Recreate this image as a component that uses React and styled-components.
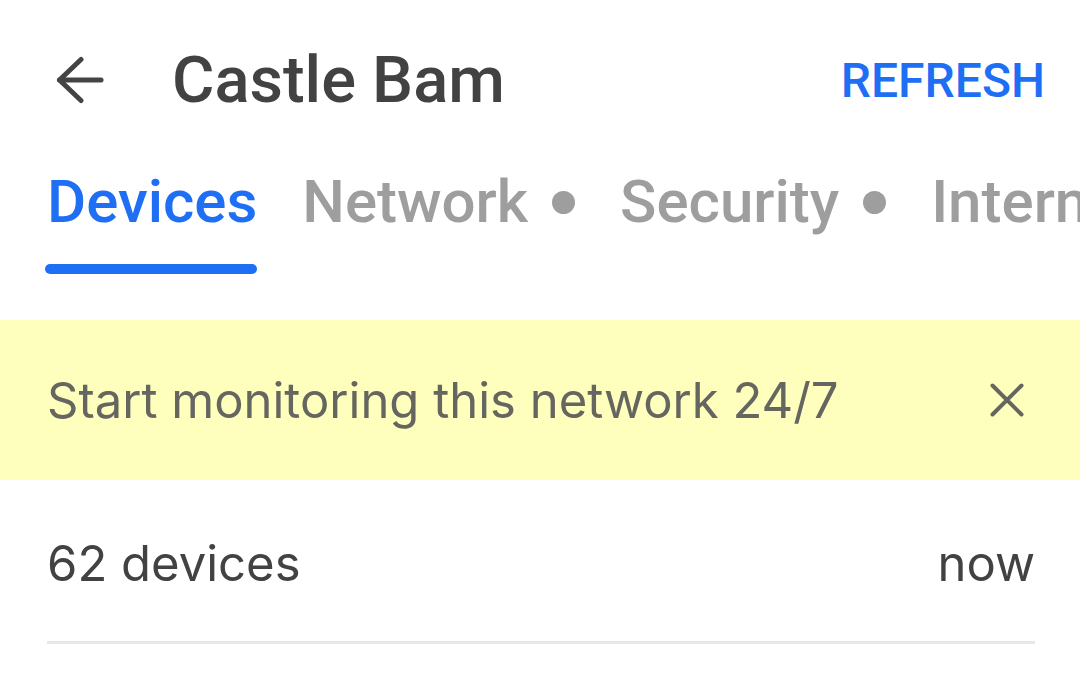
import React from "react";
import styled, { createGlobalStyle } from "styled-components";

const Global = createGlobalStyle`
  html, body { margin: 0; padding: 0; background: #ffffff; }
  body { font-family: Roboto, "Noto Sans", sans-serif; overflow: hidden; }
`;

const Page = styled.div`
  width: 1080px;
  height: 677px;
  background: #fff;
  overflow: hidden;
`;

const TopBar = styled.header`
  display: flex;
  align-items: center;
  height: 160px;
  padding: 0 35px 0 50px;
  box-sizing: border-box;
`;

const IconButton = styled.button`
  display: flex;
  align-items: center;
  justify-content: center;
  width: 60px;
  height: 60px;
  padding: 0;
  border: none;
  background: none;
  color: #444444;
`;

const Title = styled.h1`
  flex: 1;
  margin: 0 0 0 62px;
  font-size: 65px;
  font-weight: 500;
  color: #424242;
`;

const TextButton = styled.button`
  border: none;
  background: none;
  padding: 0;
  font-family: inherit;
  font-size: 48px;
  font-weight: 500;
  color: #1f6ff5;
`;

const Tabs = styled.nav`
  display: flex;
  align-items: flex-start;
  gap: 45px;
  padding-left: 47px;
  height: 160px;
  white-space: nowrap;
  overflow: hidden;
`;

const Tab = styled.div`
  display: flex;
  flex-direction: column;
  align-items: stretch;
  flex-shrink: 0;
`;

const TabLabel = styled.div`
  display: flex;
  align-items: center;
  gap: 24px;
  font-size: 60px;
  font-weight: 500;
  line-height: 84px;
  color: ${(p) => (p.$active ? "#1f6ff5" : "#9e9e9e")};
`;

const Dot = styled.span`
  width: 23px;
  height: 23px;
  border-radius: 50%;
  background: #9e9e9e;
`;

const Indicator = styled.div`
  height: 10px;
  margin: 20px 0 0 -2px;
  border-radius: 5px;
  background: ${(p) => (p.$active ? "#1f6ff5" : "transparent")};
`;

const Banner = styled.div`
  display: flex;
  align-items: center;
  justify-content: space-between;
  height: 160px;
  padding: 0 55px 0 47px;
  background: #fefebd;
  font-family: Inter, Roboto, sans-serif;
  font-size: 49px;
  color: #666660;
`;

const CloseButton = styled.button`
  display: flex;
  border: none;
  background: none;
  padding: 0;
  color: #666660;
`;

const SummaryRow = styled.div`
  display: flex;
  align-items: center;
  justify-content: space-between;
  height: 164px;
  padding-top: 6px;
  margin: 0 45px 0 47px;
  border-bottom: 3px solid #e8e8e8;
  box-sizing: border-box;
  font-family: Inter, Roboto, sans-serif;
  font-size: 49px;
  color: #424242;
`;

const tabs = [
  { label: "Devices", active: true },
  { label: "Network", dot: true },
  { label: "Security", dot: true },
  { label: "Internet" },
];

export default function App() {
  return (
    <Page>
      <Global />
      <TopBar>
        <IconButton aria-label="Back">
          <svg width="48" height="48" viewBox="0 0 48 48" fill="none" stroke="currentColor" strokeWidth="5" strokeLinecap="round" strokeLinejoin="round">
            <path d="M45 24H3.5" />
            <path d="M25 3.5L3.5 24L25 44.5" />
          </svg>
        </IconButton>
        <Title>Castle Bam</Title>
        <TextButton>REFRESH</TextButton>
      </TopBar>
      <Tabs>
        {tabs.map((t) => (
          <Tab key={t.label}>
            <TabLabel $active={t.active}>
              {t.label}
              {t.dot && <Dot />}
            </TabLabel>
            <Indicator $active={t.active} />
          </Tab>
        ))}
      </Tabs>
      <Banner>
        <span>Start monitoring this network 24/7</span>
        <CloseButton aria-label="Dismiss">
          <svg width="36" height="36" viewBox="0 0 36 36" fill="none" stroke="currentColor" strokeWidth="4" strokeLinecap="round">
            <path d="M3.5 3.5l29 29M32.5 3.5l-29 29" />
          </svg>
        </CloseButton>
      </Banner>
      <SummaryRow>
        <span>62 devices</span>
        <span>now</span>
      </SummaryRow>
    </Page>
  );
}
